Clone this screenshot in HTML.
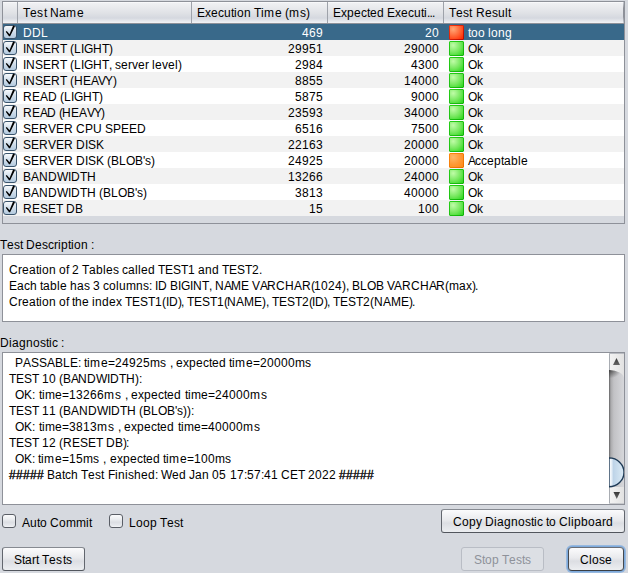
<!DOCTYPE html>
<html><head><meta charset="utf-8">
<style>
html,body{margin:0;padding:0;}
body{width:628px;height:573px;background:#d6d9df;position:relative;overflow:hidden;font-family:"Liberation Sans",sans-serif;font-size:12px;color:#000;}
.t{position:absolute;white-space:nowrap;line-height:16px;height:16px;}
.t i{display:inline-block;font-style:normal;overflow:visible;}
#tbl{position:absolute;left:2px;top:1px;width:621px;height:221px;border:1px solid #8e9199;background:#d6d9df;}
.hd{position:absolute;top:0;height:21px;border-bottom:1px solid #8e9199;background:linear-gradient(#fdfdfe 0px,#eff0f3 1.5px,#e0e2e6 11px,#d5d8df 16px,#e3e5ea 18.5px,#f2f3f6 21px);}
.hsep{position:absolute;top:0;width:1px;height:21px;background:#9ea2aa;}
.row{position:absolute;left:0;width:621px;height:16px;}
.r0{background:#f2f2f2}.r1{background:#fff}
.sel{background:#39698a;color:#fff}
.cb{position:absolute;left:0px;top:1px;width:12px;height:12px;border:1px solid #3a546c;border-radius:3px;background:linear-gradient(#f8fafc,#d4e0ec 45%,#bcd0e2 85%,#b4cadf);}
.ico{position:absolute;left:446px;top:1px;width:15px;height:15px;}
.ck{position:absolute;left:0;top:0;width:16px;height:16px;}
.box{position:absolute;background:#fff;border:1px solid #8e9199;}
.btn{position:absolute;border:1px solid;border-color:#868a91 #62666e #52565d #62666e;border-radius:3px;background:linear-gradient(#fbfbfc,#e9eaed 45%,#dcdee3 60%,#eceef1);}
.chk{position:absolute;width:12px;height:12px;border:1px solid #5a5e66;border-radius:3px;background:linear-gradient(#fbfbfc,#eceef1 35%,#dcdee3 60%,#e6e8ec 85%,#f3f4f6);}
</style></head><body>
<svg width="0" height="0" style="position:absolute"><defs>
<radialGradient id="fR" cx="0.25" cy="0.25" r="1.0"><stop offset="0" stop-color="#ffa878"/><stop offset="0.5" stop-color="#ff6a3a"/><stop offset="1" stop-color="#ff2a00"/></radialGradient>
<linearGradient id="bR" x1="0" y1="0" x2="1" y2="1"><stop offset="0" stop-color="#ff3a10"/><stop offset="1" stop-color="#b00800"/></linearGradient>
<radialGradient id="fG" cx="0.25" cy="0.25" r="1.0"><stop offset="0" stop-color="#c0fca8"/><stop offset="0.55" stop-color="#78e860"/><stop offset="1" stop-color="#30d820"/></radialGradient>
<linearGradient id="bG" x1="0" y1="0" x2="1" y2="1"><stop offset="0" stop-color="#28d018"/><stop offset="1" stop-color="#10b008"/></linearGradient>
<radialGradient id="fO" cx="0.25" cy="0.25" r="1.0"><stop offset="0" stop-color="#ffb868"/><stop offset="0.55" stop-color="#ff9a38"/><stop offset="1" stop-color="#ff8a18"/></radialGradient>
<linearGradient id="bO" x1="0" y1="0" x2="1" y2="1"><stop offset="0" stop-color="#ff8a10"/><stop offset="1" stop-color="#e86e00"/></linearGradient>
</defs></svg>
<div id="tbl">
<div class="hd" style="left:0;width:621px;"></div>
<div class="hsep" style="left:14px"></div>
<div class="hsep" style="left:188px"></div>
<div class="hsep" style="left:324px"></div>
<div class="hsep" style="left:440px"></div>
<div class="hsep" style="left:620px;background:linear-gradient(#c8cbd2,#8e9199 30%,#8e9199 70%,#c8cbd2)"></div>
<div class="t" style="left:20px;top:3px;"><i style="width:7px">T</i><i style="width:7px">e</i><i style="width:7px">s</i><i style="width:3px">t</i><i style="width:3px">&nbsp;</i><i style="width:9px">N</i><i style="width:7px">a</i><i style="width:11px">m</i><i style="width:7px">e</i></div>
<div class="t" style="left:194px;top:3px;"><i style="width:8px">E</i><i style="width:6px">x</i><i style="width:7px">e</i><i style="width:6px">c</i><i style="width:7px">u</i><i style="width:3px">t</i><i style="width:3px">i</i><i style="width:7px">o</i><i style="width:7px">n</i><i style="width:3px">&nbsp;</i><i style="width:7px">T</i><i style="width:3px">i</i><i style="width:11px">m</i><i style="width:7px">e</i><i style="width:3px">&nbsp;</i><i style="width:4px">(</i><i style="width:11px">m</i><i style="width:6px">s</i><i style="width:4px">)</i></div>
<div class="t" style="left:330px;top:3px;"><i style="width:8px">E</i><i style="width:6px">x</i><i style="width:7px">p</i><i style="width:7px">e</i><i style="width:6px">c</i><i style="width:3px">t</i><i style="width:7px">e</i><i style="width:7px">d</i><i style="width:3px">&nbsp;</i><i style="width:8px">E</i><i style="width:6px">x</i><i style="width:7px">e</i><i style="width:6px">c</i><i style="width:7px">u</i><i style="width:3px">t</i><i style="width:3px">i</i><i style="width:2.5px">.</i><i style="width:2.5px">.</i><i style="width:3px">.</i></div>
<div class="t" style="left:446px;top:3px;"><i style="width:7px">T</i><i style="width:7px">e</i><i style="width:6px">s</i><i style="width:3px">t</i><i style="width:4px">&nbsp;</i><i style="width:9px">R</i><i style="width:7px">e</i><i style="width:6px">s</i><i style="width:7px">u</i><i style="width:3px">l</i><i style="width:3px">t</i></div>
<div class="row sel" style="top:22px"><div class="cb"></div><svg class="ck" viewBox="0 0 16 16"><path d="M2.75 7.8 L3.75 7.0 L6.5 10.3 L10.1 1.6 L12.0 2.3 L7.1 12.3 L6.0 12.3 Z" fill="#000"/></svg><div class="t" style="left:20px;top:1px;"><i style="width:9px">D</i><i style="width:9px">D</i><i style="width:7px">L</i></div><div class="t" style="left:299px;top:1px;"><i style="width:7px">4</i><i style="width:7px">6</i><i style="width:7px">9</i></div><div class="t" style="left:422px;top:1px;"><i style="width:7px">2</i><i style="width:7px">0</i></div><svg class="ico" viewBox="0 0 15 15"><path d="M1,0 H14 L15,1 V14 L14,15 H1 L0,14 V1 Z" fill="url(#bR)"/><rect x="1" y="1" width="13" height="13" fill="url(#fR)"/></svg><div class="t" style="left:465px;top:1px;"><i style="width:3px">t</i><i style="width:7px">o</i><i style="width:7px">o</i><i style="width:3px">&nbsp;</i><i style="width:3px">l</i><i style="width:7px">o</i><i style="width:7px">n</i><i style="width:7px">g</i></div></div>
<div class="row r0" style="top:38px"><div class="cb"></div><svg class="ck" viewBox="0 0 16 16"><path d="M2.75 7.8 L3.75 7.0 L6.5 10.3 L10.1 1.6 L12.0 2.3 L7.1 12.3 L6.0 12.3 Z" fill="#000"/></svg><div class="t" style="left:20px;top:1px;"><i style="width:3px">I</i><i style="width:9px">N</i><i style="width:8px">S</i><i style="width:8px">E</i><i style="width:9px">R</i><i style="width:7px">T</i><i style="width:3px">&nbsp;</i><i style="width:4px">(</i><i style="width:7px">L</i><i style="width:3px">I</i><i style="width:9px">G</i><i style="width:9px">H</i><i style="width:7px">T</i><i style="width:4px">)</i></div><div class="t" style="left:285px;top:1px;"><i style="width:7px">2</i><i style="width:7px">9</i><i style="width:7px">9</i><i style="width:7px">5</i><i style="width:7px">1</i></div><div class="t" style="left:401px;top:1px;"><i style="width:7px">2</i><i style="width:7px">9</i><i style="width:7px">0</i><i style="width:7px">0</i><i style="width:7px">0</i></div><svg class="ico" viewBox="0 0 15 15"><path d="M1,0 H14 L15,1 V14 L14,15 H1 L0,14 V1 Z" fill="url(#bG)"/><rect x="1" y="1" width="13" height="13" fill="url(#fG)"/></svg><div class="t" style="left:465px;top:1px;"><i style="width:9px">O</i><i style="width:6px">k</i></div></div>
<div class="row r1" style="top:54px"><div class="cb"></div><svg class="ck" viewBox="0 0 16 16"><path d="M2.75 7.8 L3.75 7.0 L6.5 10.3 L10.1 1.6 L12.0 2.3 L7.1 12.3 L6.0 12.3 Z" fill="#000"/></svg><div class="t" style="left:20px;top:1px;"><i style="width:3px">I</i><i style="width:9px">N</i><i style="width:8px">S</i><i style="width:8px">E</i><i style="width:9px">R</i><i style="width:7px">T</i><i style="width:3px">&nbsp;</i><i style="width:4px">(</i><i style="width:7px">L</i><i style="width:3px">I</i><i style="width:9px">G</i><i style="width:9px">H</i><i style="width:7px">T</i><i style="width:3px">,</i><i style="width:3px">&nbsp;</i><i style="width:6px">s</i><i style="width:7px">e</i><i style="width:4px">r</i><i style="width:6px">v</i><i style="width:7px">e</i><i style="width:4px">r</i><i style="width:3px">&nbsp;</i><i style="width:3px">l</i><i style="width:7px">e</i><i style="width:6px">v</i><i style="width:7px">e</i><i style="width:3px">l</i><i style="width:4px">)</i></div><div class="t" style="left:292px;top:1px;"><i style="width:7px">2</i><i style="width:7px">9</i><i style="width:7px">8</i><i style="width:7px">4</i></div><div class="t" style="left:408px;top:1px;"><i style="width:7px">4</i><i style="width:7px">3</i><i style="width:7px">0</i><i style="width:7px">0</i></div><svg class="ico" viewBox="0 0 15 15"><path d="M1,0 H14 L15,1 V14 L14,15 H1 L0,14 V1 Z" fill="url(#bG)"/><rect x="1" y="1" width="13" height="13" fill="url(#fG)"/></svg><div class="t" style="left:465px;top:1px;"><i style="width:9px">O</i><i style="width:6px">k</i></div></div>
<div class="row r0" style="top:70px"><div class="cb"></div><svg class="ck" viewBox="0 0 16 16"><path d="M2.75 7.8 L3.75 7.0 L6.5 10.3 L10.1 1.6 L12.0 2.3 L7.1 12.3 L6.0 12.3 Z" fill="#000"/></svg><div class="t" style="left:20px;top:1px;"><i style="width:3px">I</i><i style="width:9px">N</i><i style="width:8px">S</i><i style="width:8px">E</i><i style="width:9px">R</i><i style="width:7px">T</i><i style="width:3px">&nbsp;</i><i style="width:4px">(</i><i style="width:9px">H</i><i style="width:8px">E</i><i style="width:7px">A</i><i style="width:7px">V</i><i style="width:8px">Y</i><i style="width:4px">)</i></div><div class="t" style="left:292px;top:1px;"><i style="width:7px">8</i><i style="width:7px">8</i><i style="width:7px">5</i><i style="width:7px">5</i></div><div class="t" style="left:401px;top:1px;"><i style="width:7px">1</i><i style="width:7px">4</i><i style="width:7px">0</i><i style="width:7px">0</i><i style="width:7px">0</i></div><svg class="ico" viewBox="0 0 15 15"><path d="M1,0 H14 L15,1 V14 L14,15 H1 L0,14 V1 Z" fill="url(#bG)"/><rect x="1" y="1" width="13" height="13" fill="url(#fG)"/></svg><div class="t" style="left:465px;top:1px;"><i style="width:9px">O</i><i style="width:6px">k</i></div></div>
<div class="row r1" style="top:86px"><div class="cb"></div><svg class="ck" viewBox="0 0 16 16"><path d="M2.75 7.8 L3.75 7.0 L6.5 10.3 L10.1 1.6 L12.0 2.3 L7.1 12.3 L6.0 12.3 Z" fill="#000"/></svg><div class="t" style="left:20px;top:1px;"><i style="width:9px">R</i><i style="width:8px">E</i><i style="width:8px">A</i><i style="width:9px">D</i><i style="width:3px">&nbsp;</i><i style="width:4px">(</i><i style="width:7px">L</i><i style="width:3px">I</i><i style="width:9px">G</i><i style="width:9px">H</i><i style="width:7px">T</i><i style="width:4px">)</i></div><div class="t" style="left:292px;top:1px;"><i style="width:7px">5</i><i style="width:7px">8</i><i style="width:7px">7</i><i style="width:7px">5</i></div><div class="t" style="left:408px;top:1px;"><i style="width:7px">9</i><i style="width:7px">0</i><i style="width:7px">0</i><i style="width:7px">0</i></div><svg class="ico" viewBox="0 0 15 15"><path d="M1,0 H14 L15,1 V14 L14,15 H1 L0,14 V1 Z" fill="url(#bG)"/><rect x="1" y="1" width="13" height="13" fill="url(#fG)"/></svg><div class="t" style="left:465px;top:1px;"><i style="width:9px">O</i><i style="width:6px">k</i></div></div>
<div class="row r0" style="top:102px"><div class="cb"></div><svg class="ck" viewBox="0 0 16 16"><path d="M2.75 7.8 L3.75 7.0 L6.5 10.3 L10.1 1.6 L12.0 2.3 L7.1 12.3 L6.0 12.3 Z" fill="#000"/></svg><div class="t" style="left:20px;top:1px;"><i style="width:9px">R</i><i style="width:8px">E</i><i style="width:7px">A</i><i style="width:9px">D</i><i style="width:3px">&nbsp;</i><i style="width:3px">(</i><i style="width:9px">H</i><i style="width:8px">E</i><i style="width:8px">A</i><i style="width:7px">V</i><i style="width:7px">Y</i><i style="width:4px">)</i></div><div class="t" style="left:285px;top:1px;"><i style="width:7px">2</i><i style="width:7px">3</i><i style="width:7px">5</i><i style="width:7px">9</i><i style="width:7px">3</i></div><div class="t" style="left:401px;top:1px;"><i style="width:7px">3</i><i style="width:7px">4</i><i style="width:7px">0</i><i style="width:7px">0</i><i style="width:7px">0</i></div><svg class="ico" viewBox="0 0 15 15"><path d="M1,0 H14 L15,1 V14 L14,15 H1 L0,14 V1 Z" fill="url(#bG)"/><rect x="1" y="1" width="13" height="13" fill="url(#fG)"/></svg><div class="t" style="left:465px;top:1px;"><i style="width:9px">O</i><i style="width:6px">k</i></div></div>
<div class="row r1" style="top:118px"><div class="cb"></div><svg class="ck" viewBox="0 0 16 16"><path d="M2.75 7.8 L3.75 7.0 L6.5 10.3 L10.1 1.6 L12.0 2.3 L7.1 12.3 L6.0 12.3 Z" fill="#000"/></svg><div class="t" style="left:20px;top:1px;"><i style="width:8px">S</i><i style="width:8px">E</i><i style="width:9px">R</i><i style="width:8px">V</i><i style="width:8px">E</i><i style="width:9px">R</i><i style="width:3px">&nbsp;</i><i style="width:9px">C</i><i style="width:8px">P</i><i style="width:9px">U</i><i style="width:3px">&nbsp;</i><i style="width:8px">S</i><i style="width:8px">P</i><i style="width:8px">E</i><i style="width:8px">E</i><i style="width:9px">D</i></div><div class="t" style="left:292px;top:1px;"><i style="width:7px">6</i><i style="width:7px">5</i><i style="width:7px">1</i><i style="width:7px">6</i></div><div class="t" style="left:408px;top:1px;"><i style="width:7px">7</i><i style="width:7px">5</i><i style="width:7px">0</i><i style="width:7px">0</i></div><svg class="ico" viewBox="0 0 15 15"><path d="M1,0 H14 L15,1 V14 L14,15 H1 L0,14 V1 Z" fill="url(#bG)"/><rect x="1" y="1" width="13" height="13" fill="url(#fG)"/></svg><div class="t" style="left:465px;top:1px;"><i style="width:9px">O</i><i style="width:6px">k</i></div></div>
<div class="row r0" style="top:134px"><div class="cb"></div><svg class="ck" viewBox="0 0 16 16"><path d="M2.75 7.8 L3.75 7.0 L6.5 10.3 L10.1 1.6 L12.0 2.3 L7.1 12.3 L6.0 12.3 Z" fill="#000"/></svg><div class="t" style="left:20px;top:1px;"><i style="width:8px">S</i><i style="width:8px">E</i><i style="width:9px">R</i><i style="width:8px">V</i><i style="width:8px">E</i><i style="width:9px">R</i><i style="width:3px">&nbsp;</i><i style="width:9px">D</i><i style="width:3px">I</i><i style="width:8px">S</i><i style="width:8px">K</i></div><div class="t" style="left:285px;top:1px;"><i style="width:7px">2</i><i style="width:7px">2</i><i style="width:7px">1</i><i style="width:7px">6</i><i style="width:7px">3</i></div><div class="t" style="left:401px;top:1px;"><i style="width:7px">2</i><i style="width:7px">0</i><i style="width:7px">0</i><i style="width:7px">0</i><i style="width:7px">0</i></div><svg class="ico" viewBox="0 0 15 15"><path d="M1,0 H14 L15,1 V14 L14,15 H1 L0,14 V1 Z" fill="url(#bG)"/><rect x="1" y="1" width="13" height="13" fill="url(#fG)"/></svg><div class="t" style="left:465px;top:1px;"><i style="width:9px">O</i><i style="width:6px">k</i></div></div>
<div class="row r1" style="top:150px"><div class="cb"></div><svg class="ck" viewBox="0 0 16 16"><path d="M2.75 7.8 L3.75 7.0 L6.5 10.3 L10.1 1.6 L12.0 2.3 L7.1 12.3 L6.0 12.3 Z" fill="#000"/></svg><div class="t" style="left:20px;top:1px;"><i style="width:8px">S</i><i style="width:8px">E</i><i style="width:9px">R</i><i style="width:8px">V</i><i style="width:8px">E</i><i style="width:9px">R</i><i style="width:3px">&nbsp;</i><i style="width:9px">D</i><i style="width:3px">I</i><i style="width:8px">S</i><i style="width:8px">K</i><i style="width:3px">&nbsp;</i><i style="width:4px">(</i><i style="width:8px">B</i><i style="width:7px">L</i><i style="width:9px">O</i><i style="width:8px">B</i><i style="width:2px">&#x27;</i><i style="width:6px">s</i><i style="width:4px">)</i></div><div class="t" style="left:285px;top:1px;"><i style="width:7px">2</i><i style="width:7px">4</i><i style="width:7px">9</i><i style="width:7px">2</i><i style="width:7px">5</i></div><div class="t" style="left:401px;top:1px;"><i style="width:7px">2</i><i style="width:7px">0</i><i style="width:7px">0</i><i style="width:7px">0</i><i style="width:7px">0</i></div><svg class="ico" viewBox="0 0 15 15"><path d="M1,0 H14 L15,1 V14 L14,15 H1 L0,14 V1 Z" fill="url(#bO)"/><rect x="1" y="1" width="13" height="13" fill="url(#fO)"/></svg><div class="t" style="left:465px;top:1px;"><i style="width:7px">A</i><i style="width:6px">c</i><i style="width:6px">c</i><i style="width:7px">e</i><i style="width:7px">p</i><i style="width:3px">t</i><i style="width:7px">a</i><i style="width:7px">b</i><i style="width:3px">l</i><i style="width:7px">e</i></div></div>
<div class="row r0" style="top:166px"><div class="cb"></div><svg class="ck" viewBox="0 0 16 16"><path d="M2.75 7.8 L3.75 7.0 L6.5 10.3 L10.1 1.6 L12.0 2.3 L7.1 12.3 L6.0 12.3 Z" fill="#000"/></svg><div class="t" style="left:20px;top:1px;"><i style="width:8px">B</i><i style="width:8px">A</i><i style="width:9px">N</i><i style="width:9px">D</i><i style="width:11px">W</i><i style="width:3px">I</i><i style="width:9px">D</i><i style="width:7px">T</i><i style="width:9px">H</i></div><div class="t" style="left:285px;top:1px;"><i style="width:7px">1</i><i style="width:7px">3</i><i style="width:7px">2</i><i style="width:7px">6</i><i style="width:7px">6</i></div><div class="t" style="left:401px;top:1px;"><i style="width:7px">2</i><i style="width:7px">4</i><i style="width:7px">0</i><i style="width:7px">0</i><i style="width:7px">0</i></div><svg class="ico" viewBox="0 0 15 15"><path d="M1,0 H14 L15,1 V14 L14,15 H1 L0,14 V1 Z" fill="url(#bG)"/><rect x="1" y="1" width="13" height="13" fill="url(#fG)"/></svg><div class="t" style="left:465px;top:1px;"><i style="width:9px">O</i><i style="width:6px">k</i></div></div>
<div class="row r1" style="top:182px"><div class="cb"></div><svg class="ck" viewBox="0 0 16 16"><path d="M2.75 7.8 L3.75 7.0 L6.5 10.3 L10.1 1.6 L12.0 2.3 L7.1 12.3 L6.0 12.3 Z" fill="#000"/></svg><div class="t" style="left:20px;top:1px;"><i style="width:8px">B</i><i style="width:8px">A</i><i style="width:9px">N</i><i style="width:9px">D</i><i style="width:11px">W</i><i style="width:3px">I</i><i style="width:9px">D</i><i style="width:7px">T</i><i style="width:9px">H</i><i style="width:3px">&nbsp;</i><i style="width:4px">(</i><i style="width:8px">B</i><i style="width:7px">L</i><i style="width:9px">O</i><i style="width:8px">B</i><i style="width:2px">&#x27;</i><i style="width:6px">s</i><i style="width:4px">)</i></div><div class="t" style="left:292px;top:1px;"><i style="width:7px">3</i><i style="width:7px">8</i><i style="width:7px">1</i><i style="width:7px">3</i></div><div class="t" style="left:401px;top:1px;"><i style="width:7px">4</i><i style="width:7px">0</i><i style="width:7px">0</i><i style="width:7px">0</i><i style="width:7px">0</i></div><svg class="ico" viewBox="0 0 15 15"><path d="M1,0 H14 L15,1 V14 L14,15 H1 L0,14 V1 Z" fill="url(#bG)"/><rect x="1" y="1" width="13" height="13" fill="url(#fG)"/></svg><div class="t" style="left:465px;top:1px;"><i style="width:9px">O</i><i style="width:6px">k</i></div></div>
<div class="row r0" style="top:198px"><div class="cb"></div><svg class="ck" viewBox="0 0 16 16"><path d="M2.75 7.8 L3.75 7.0 L6.5 10.3 L10.1 1.6 L12.0 2.3 L7.1 12.3 L6.0 12.3 Z" fill="#000"/></svg><div class="t" style="left:20px;top:1px;"><i style="width:9px">R</i><i style="width:8px">E</i><i style="width:8px">S</i><i style="width:8px">E</i><i style="width:7px">T</i><i style="width:3px">&nbsp;</i><i style="width:9px">D</i><i style="width:8px">B</i></div><div class="t" style="left:306px;top:1px;"><i style="width:7px">1</i><i style="width:7px">5</i></div><div class="t" style="left:415px;top:1px;"><i style="width:7px">1</i><i style="width:7px">0</i><i style="width:7px">0</i></div><svg class="ico" viewBox="0 0 15 15"><path d="M1,0 H14 L15,1 V14 L14,15 H1 L0,14 V1 Z" fill="url(#bG)"/><rect x="1" y="1" width="13" height="13" fill="url(#fG)"/></svg><div class="t" style="left:465px;top:1px;"><i style="width:9px">O</i><i style="width:6px">k</i></div></div>
</div>
<div class="t" style="left:0px;top:237px;"><i style="width:7px">T</i><i style="width:7px">e</i><i style="width:6px">s</i><i style="width:3px">t</i><i style="width:3px">&nbsp;</i><i style="width:9px">D</i><i style="width:7px">e</i><i style="width:6px">s</i><i style="width:6px">c</i><i style="width:4px">r</i><i style="width:3px">i</i><i style="width:7px">p</i><i style="width:3px">t</i><i style="width:3px">i</i><i style="width:7px">o</i><i style="width:7px">n</i><i style="width:3px">&nbsp;</i><i style="width:3px">:</i></div>
<div class="box" style="left:2px;top:254px;width:621px;height:66px;">
<div class="t" style="left:6px;top:7px;"><i style="width:9px">C</i><i style="width:4px">r</i><i style="width:7px">e</i><i style="width:7px">a</i><i style="width:3px">t</i><i style="width:3px">i</i><i style="width:7px">o</i><i style="width:7px">n</i><i style="width:3px">&nbsp;</i><i style="width:7px">o</i><i style="width:3px">f</i><i style="width:3px">&nbsp;</i><i style="width:7px">2</i><i style="width:3px">&nbsp;</i><i style="width:7px">T</i><i style="width:7px">a</i><i style="width:7px">b</i><i style="width:3px">l</i><i style="width:7px">e</i><i style="width:6px">s</i><i style="width:3px">&nbsp;</i><i style="width:6px">c</i><i style="width:7px">a</i><i style="width:3px">l</i><i style="width:3px">l</i><i style="width:7px">e</i><i style="width:7px">d</i><i style="width:3px">&nbsp;</i><i style="width:7px">T</i><i style="width:8px">E</i><i style="width:8px">S</i><i style="width:7px">T</i><i style="width:7px">1</i><i style="width:3px">&nbsp;</i><i style="width:7px">a</i><i style="width:7px">n</i><i style="width:7px">d</i><i style="width:3px">&nbsp;</i><i style="width:7px">T</i><i style="width:8px">E</i><i style="width:8px">S</i><i style="width:7px">T</i><i style="width:7px">2</i><i style="width:3px">.</i></div>
<div class="t" style="left:6px;top:23px;"><i style="width:8px">E</i><i style="width:7px">a</i><i style="width:6px">c</i><i style="width:7px">h</i><i style="width:3px">&nbsp;</i><i style="width:3px">t</i><i style="width:7px">a</i><i style="width:7px">b</i><i style="width:3px">l</i><i style="width:7px">e</i><i style="width:3px">&nbsp;</i><i style="width:7px">h</i><i style="width:7px">a</i><i style="width:6px">s</i><i style="width:3px">&nbsp;</i><i style="width:7px">3</i><i style="width:3px">&nbsp;</i><i style="width:6px">c</i><i style="width:7px">o</i><i style="width:3px">l</i><i style="width:7px">u</i><i style="width:10px">m</i><i style="width:7px">n</i><i style="width:6px">s</i><i style="width:3px">:</i><i style="width:3px">&nbsp;</i><i style="width:3px">I</i><i style="width:9px">D</i><i style="width:3px">&nbsp;</i><i style="width:8px">B</i><i style="width:3px">I</i><i style="width:9px">G</i><i style="width:3px">I</i><i style="width:9px">N</i><i style="width:7px">T</i><i style="width:3px">,</i><i style="width:3px">&nbsp;</i><i style="width:9px">N</i><i style="width:7px">A</i><i style="width:10px">M</i><i style="width:8px">E</i><i style="width:3px">&nbsp;</i><i style="width:8px">V</i><i style="width:7px">A</i><i style="width:9px">R</i><i style="width:9px">C</i><i style="width:9px">H</i><i style="width:8px">A</i><i style="width:9px">R</i><i style="width:3px">(</i><i style="width:7px">1</i><i style="width:7px">0</i><i style="width:7px">2</i><i style="width:7px">4</i><i style="width:4px">)</i><i style="width:3px">,</i><i style="width:3px">&nbsp;</i><i style="width:8px">B</i><i style="width:7px">L</i><i style="width:9px">O</i><i style="width:8px">B</i><i style="width:3px">&nbsp;</i><i style="width:7px">V</i><i style="width:8px">A</i><i style="width:9px">R</i><i style="width:9px">C</i><i style="width:9px">H</i><i style="width:7px">A</i><i style="width:9px">R</i><i style="width:4px">(</i><i style="width:10px">m</i><i style="width:7px">a</i><i style="width:6px">x</i><i style="width:3px">)</i><i style="width:3px">.</i></div>
<div class="t" style="left:6px;top:39px;"><i style="width:9px">C</i><i style="width:4px">r</i><i style="width:7px">e</i><i style="width:7px">a</i><i style="width:3px">t</i><i style="width:3px">i</i><i style="width:7px">o</i><i style="width:7px">n</i><i style="width:3px">&nbsp;</i><i style="width:7px">o</i><i style="width:3px">f</i><i style="width:3px">&nbsp;</i><i style="width:3px">t</i><i style="width:7px">h</i><i style="width:7px">e</i><i style="width:3px">&nbsp;</i><i style="width:3px">i</i><i style="width:7px">n</i><i style="width:7px">d</i><i style="width:7px">e</i><i style="width:6px">x</i><i style="width:3px">&nbsp;</i><i style="width:7px">T</i><i style="width:8px">E</i><i style="width:8px">S</i><i style="width:7px">T</i><i style="width:7px">1</i><i style="width:4px">(</i><i style="width:3px">I</i><i style="width:9px">D</i><i style="width:3px">)</i><i style="width:3px">,</i><i style="width:3px">&nbsp;</i><i style="width:7px">T</i><i style="width:8px">E</i><i style="width:8px">S</i><i style="width:7px">T</i><i style="width:7px">1</i><i style="width:3px">(</i><i style="width:9px">N</i><i style="width:8px">A</i><i style="width:10px">M</i><i style="width:8px">E</i><i style="width:4px">)</i><i style="width:3px">,</i><i style="width:3px">&nbsp;</i><i style="width:7px">T</i><i style="width:8px">E</i><i style="width:8px">S</i><i style="width:7px">T</i><i style="width:7px">2</i><i style="width:3px">(</i><i style="width:3px">I</i><i style="width:9px">D</i><i style="width:3px">)</i><i style="width:3px">,</i><i style="width:3px">&nbsp;</i><i style="width:7px">T</i><i style="width:8px">E</i><i style="width:8px">S</i><i style="width:7px">T</i><i style="width:7px">2</i><i style="width:4px">(</i><i style="width:9px">N</i><i style="width:8px">A</i><i style="width:10px">M</i><i style="width:8px">E</i><i style="width:3px">)</i><i style="width:3px">.</i></div>
</div>
<div class="t" style="left:0px;top:335px;"><i style="width:9px">D</i><i style="width:3px">i</i><i style="width:7px">a</i><i style="width:7px">g</i><i style="width:7px">n</i><i style="width:7px">o</i><i style="width:6px">s</i><i style="width:3px">t</i><i style="width:3px">i</i><i style="width:6px">c</i><i style="width:3px">&nbsp;</i><i style="width:3px">:</i></div>
<div class="box" style="left:2px;top:352px;width:621px;height:151px;">
<div class="t" style="left:6px;top:2px;"><i style="width:3px">&nbsp;</i><i style="width:3px">&nbsp;</i><i style="width:8px">P</i><i style="width:8px">A</i><i style="width:8px">S</i><i style="width:8px">S</i><i style="width:8px">A</i><i style="width:8px">B</i><i style="width:7px">L</i><i style="width:8px">E</i><i style="width:3px">:</i><i style="width:3px">&nbsp;</i><i style="width:3px">t</i><i style="width:3px">i</i><i style="width:11px">m</i><i style="width:7px">e</i><i style="width:7px">=</i><i style="width:7px">2</i><i style="width:7px">4</i><i style="width:7px">9</i><i style="width:7px">2</i><i style="width:7px">5</i><i style="width:10px">m</i><i style="width:6px">s</i><i style="width:4px">&nbsp;</i><i style="width:3px">,</i><i style="width:3px">&nbsp;</i><i style="width:7px">e</i><i style="width:6px">x</i><i style="width:7px">p</i><i style="width:7px">e</i><i style="width:6px">c</i><i style="width:3px">t</i><i style="width:7px">e</i><i style="width:7px">d</i><i style="width:3px">&nbsp;</i><i style="width:3px">t</i><i style="width:3px">i</i><i style="width:11px">m</i><i style="width:7px">e</i><i style="width:7px">=</i><i style="width:7px">2</i><i style="width:7px">0</i><i style="width:7px">0</i><i style="width:7px">0</i><i style="width:7px">0</i><i style="width:10px">m</i><i style="width:6px">s</i></div>
<div class="t" style="left:6px;top:18px;"><i style="width:7px">T</i><i style="width:8px">E</i><i style="width:8px">S</i><i style="width:7px">T</i><i style="width:3px">&nbsp;</i><i style="width:7px">1</i><i style="width:7px">0</i><i style="width:3px">&nbsp;</i><i style="width:4px">(</i><i style="width:8px">B</i><i style="width:7px">A</i><i style="width:9px">N</i><i style="width:9px">D</i><i style="width:11px">W</i><i style="width:3px">I</i><i style="width:9px">D</i><i style="width:7px">T</i><i style="width:9px">H</i><i style="width:4px">)</i><i style="width:3px">:</i></div>
<div class="t" style="left:6px;top:34px;"><i style="width:3px">&nbsp;</i><i style="width:3px">&nbsp;</i><i style="width:9px">O</i><i style="width:8px">K</i><i style="width:3px">:</i><i style="width:4px">&nbsp;</i><i style="width:3px">t</i><i style="width:3px">i</i><i style="width:10px">m</i><i style="width:7px">e</i><i style="width:7px">=</i><i style="width:7px">1</i><i style="width:7px">3</i><i style="width:7px">2</i><i style="width:7px">6</i><i style="width:7px">6</i><i style="width:11px">m</i><i style="width:6px">s</i><i style="width:4px">&nbsp;</i><i style="width:3px">,</i><i style="width:3px">&nbsp;</i><i style="width:7px">e</i><i style="width:6px">x</i><i style="width:7px">p</i><i style="width:7px">e</i><i style="width:6px">c</i><i style="width:3px">t</i><i style="width:7px">e</i><i style="width:7px">d</i><i style="width:4px">&nbsp;</i><i style="width:3px">t</i><i style="width:3px">i</i><i style="width:10px">m</i><i style="width:7px">e</i><i style="width:7px">=</i><i style="width:7px">2</i><i style="width:7px">4</i><i style="width:7px">0</i><i style="width:7px">0</i><i style="width:7px">0</i><i style="width:11px">m</i><i style="width:6px">s</i></div>
<div class="t" style="left:6px;top:50px;"><i style="width:7px">T</i><i style="width:8px">E</i><i style="width:8px">S</i><i style="width:7px">T</i><i style="width:3px">&nbsp;</i><i style="width:7px">1</i><i style="width:7px">1</i><i style="width:3px">&nbsp;</i><i style="width:4px">(</i><i style="width:8px">B</i><i style="width:8px">A</i><i style="width:9px">N</i><i style="width:9px">D</i><i style="width:11px">W</i><i style="width:3px">I</i><i style="width:9px">D</i><i style="width:7px">T</i><i style="width:9px">H</i><i style="width:3px">&nbsp;</i><i style="width:4px">(</i><i style="width:8px">B</i><i style="width:7px">L</i><i style="width:9px">O</i><i style="width:8px">B</i><i style="width:2px">&#x27;</i><i style="width:6px">s</i><i style="width:4px">)</i><i style="width:4px">)</i><i style="width:3px">:</i></div>
<div class="t" style="left:6px;top:66px;"><i style="width:3px">&nbsp;</i><i style="width:3px">&nbsp;</i><i style="width:9px">O</i><i style="width:8px">K</i><i style="width:3px">:</i><i style="width:4px">&nbsp;</i><i style="width:3px">t</i><i style="width:3px">i</i><i style="width:10px">m</i><i style="width:7px">e</i><i style="width:7px">=</i><i style="width:7px">3</i><i style="width:7px">8</i><i style="width:7px">1</i><i style="width:7px">3</i><i style="width:11px">m</i><i style="width:6px">s</i><i style="width:4px">&nbsp;</i><i style="width:3px">,</i><i style="width:3px">&nbsp;</i><i style="width:7px">e</i><i style="width:6px">x</i><i style="width:7px">p</i><i style="width:7px">e</i><i style="width:6px">c</i><i style="width:3px">t</i><i style="width:7px">e</i><i style="width:7px">d</i><i style="width:4px">&nbsp;</i><i style="width:3px">t</i><i style="width:3px">i</i><i style="width:10px">m</i><i style="width:7px">e</i><i style="width:7px">=</i><i style="width:7px">4</i><i style="width:7px">0</i><i style="width:7px">0</i><i style="width:7px">0</i><i style="width:7px">0</i><i style="width:11px">m</i><i style="width:6px">s</i></div>
<div class="t" style="left:6px;top:82px;"><i style="width:7px">T</i><i style="width:8px">E</i><i style="width:8px">S</i><i style="width:7px">T</i><i style="width:3px">&nbsp;</i><i style="width:7px">1</i><i style="width:7px">2</i><i style="width:3px">&nbsp;</i><i style="width:4px">(</i><i style="width:9px">R</i><i style="width:8px">E</i><i style="width:8px">S</i><i style="width:8px">E</i><i style="width:7px">T</i><i style="width:3px">&nbsp;</i><i style="width:9px">D</i><i style="width:8px">B</i><i style="width:3px">)</i><i style="width:3px">:</i></div>
<div class="t" style="left:6px;top:98px;"><i style="width:3px">&nbsp;</i><i style="width:3px">&nbsp;</i><i style="width:9px">O</i><i style="width:8px">K</i><i style="width:3px">:</i><i style="width:3px">&nbsp;</i><i style="width:3px">t</i><i style="width:3px">i</i><i style="width:11px">m</i><i style="width:7px">e</i><i style="width:7px">=</i><i style="width:7px">1</i><i style="width:7px">5</i><i style="width:10px">m</i><i style="width:7px">s</i><i style="width:3px">&nbsp;</i><i style="width:3px">,</i><i style="width:4px">&nbsp;</i><i style="width:7px">e</i><i style="width:6px">x</i><i style="width:7px">p</i><i style="width:7px">e</i><i style="width:6px">c</i><i style="width:3px">t</i><i style="width:7px">e</i><i style="width:7px">d</i><i style="width:3px">&nbsp;</i><i style="width:3px">t</i><i style="width:3px">i</i><i style="width:11px">m</i><i style="width:7px">e</i><i style="width:7px">=</i><i style="width:7px">1</i><i style="width:7px">0</i><i style="width:7px">0</i><i style="width:10px">m</i><i style="width:6px">s</i></div>
<div class="t" style="left:6px;top:114px;"><i style="width:7px;-webkit-text-stroke:0.35px #000">#</i><i style="width:7px;-webkit-text-stroke:0.35px #000">#</i><i style="width:7px;-webkit-text-stroke:0.35px #000">#</i><i style="width:7px;-webkit-text-stroke:0.35px #000">#</i><i style="width:7px;-webkit-text-stroke:0.35px #000">#</i><i style="width:3px">&nbsp;</i><i style="width:8px">B</i><i style="width:7px">a</i><i style="width:3px">t</i><i style="width:6px">c</i><i style="width:7px">h</i><i style="width:3px">&nbsp;</i><i style="width:7px">T</i><i style="width:7px">e</i><i style="width:6px">s</i><i style="width:3px">t</i><i style="width:4px">&nbsp;</i><i style="width:7px">F</i><i style="width:3px">i</i><i style="width:7px">n</i><i style="width:3px">i</i><i style="width:6px">s</i><i style="width:7px">h</i><i style="width:7px">e</i><i style="width:7px">d</i><i style="width:3px">:</i><i style="width:3px">&nbsp;</i><i style="width:11px">W</i><i style="width:7px">e</i><i style="width:7px">d</i><i style="width:3px">&nbsp;</i><i style="width:6px">J</i><i style="width:7px">a</i><i style="width:7px">n</i><i style="width:3px">&nbsp;</i><i style="width:7px">0</i><i style="width:7px">5</i><i style="width:4px">&nbsp;</i><i style="width:7px">1</i><i style="width:7px">7</i><i style="width:3px">:</i><i style="width:7px">5</i><i style="width:7px">7</i><i style="width:3px">:</i><i style="width:7px">4</i><i style="width:7px">1</i><i style="width:3px">&nbsp;</i><i style="width:9px">C</i><i style="width:8px">E</i><i style="width:7px">T</i><i style="width:3px">&nbsp;</i><i style="width:7px">2</i><i style="width:7px">0</i><i style="width:7px">2</i><i style="width:7px">2</i><i style="width:3px">&nbsp;</i><i style="width:7px;-webkit-text-stroke:0.35px #000">#</i><i style="width:7px;-webkit-text-stroke:0.35px #000">#</i><i style="width:7px;-webkit-text-stroke:0.35px #000">#</i><i style="width:7px;-webkit-text-stroke:0.35px #000">#</i><i style="width:7px;-webkit-text-stroke:0.35px #000">#</i></div>
<svg style="position:absolute;left:606px;top:0;" width="15" height="151" viewBox="0 0 15 151">
<defs>
<linearGradient id="trk" x1="0" y1="0" x2="1" y2="0"><stop offset="0" stop-color="#626264"/><stop offset="0.12" stop-color="#aaaaac"/><stop offset="0.32" stop-color="#c2c2c5"/><stop offset="1" stop-color="#d6d7db"/></linearGradient>
<radialGradient id="trks" gradientUnits="userSpaceOnUse" cx="0" cy="17" r="12" gradientTransform="translate(0,17) scale(1,0.7) translate(0,-17)"><stop offset="0" stop-color="#333" stop-opacity="0.85"/><stop offset="0.5" stop-color="#444" stop-opacity="0.45"/><stop offset="1" stop-color="#444" stop-opacity="0"/></radialGradient>
<linearGradient id="btn" x1="0" y1="0" x2="1" y2="0"><stop offset="0" stop-color="#f4f4f4"/><stop offset="1" stop-color="#e2e2e2"/></linearGradient>
<linearGradient id="arw" x1="0" y1="0" x2="0" y2="1"><stop offset="0" stop-color="#383838"/><stop offset="1" stop-color="#666"/></linearGradient>
<linearGradient id="thm" x1="0" y1="0" x2="1" y2="0"><stop offset="0" stop-color="#ffffff"/><stop offset="0.14" stop-color="#eef4fa"/><stop offset="0.3" stop-color="#bed4e8"/><stop offset="1" stop-color="#dcebf6"/></linearGradient>
</defs>
<rect x="0" y="0" width="15" height="151" fill="url(#btn)"/>
<path d="M0,17 A15,8.7 0 0 1 15,25.7 V151 H0 Z" fill="url(#trk)"/>
<path d="M0,17 A15,8.7 0 0 1 15,25.7 V151 H0 Z" fill="url(#trks)"/>
<rect x="0" y="134" width="15" height="17" fill="url(#btn)"/>
<rect x="0" y="0" width="1" height="17" fill="#a8acb2"/>
<rect x="0" y="0" width="15" height="1" fill="#b8bbc1"/>
<rect x="0" y="134" width="1" height="17" fill="#a8acb2"/>
<rect x="0" y="150" width="15" height="1" fill="#c8cace"/>
<path d="M0,104.9 A15,14.45 0 0 1 0,133.8 Z" fill="url(#thm)" stroke="#1e3a56" stroke-width="1.4"/>
<path d="M4,12 H11 L7.5,5 Z" fill="url(#arw)"/>
<path d="M4.5,139 H11 L7.75,146 Z" fill="url(#arw)"/>
</svg>
</div>
<div class="chk" style="left:2px;top:514px;"></div>
<div class="t" style="left:22px;top:515px;"><i style="width:8px">A</i><i style="width:7px">u</i><i style="width:3px">t</i><i style="width:7px">o</i><i style="width:3px">&nbsp;</i><i style="width:9px">C</i><i style="width:7px">o</i><i style="width:10px">m</i><i style="width:10px">m</i><i style="width:3px">i</i><i style="width:3px">t</i></div>
<div class="chk" style="left:109px;top:514px;"></div>
<div class="t" style="left:129px;top:515px;"><i style="width:7px">L</i><i style="width:7px">o</i><i style="width:7px">o</i><i style="width:7px">p</i><i style="width:3px">&nbsp;</i><i style="width:7px">T</i><i style="width:7px">e</i><i style="width:6px">s</i><i style="width:3px">t</i></div>
<div class="btn" style="left:441px;top:509px;width:182px;height:22px;"></div><div class="t" style="left:453px;top:514px;"><i style="width:9px">C</i><i style="width:7px">o</i><i style="width:7px">p</i><i style="width:6px">y</i><i style="width:3px">&nbsp;</i><i style="width:9px">D</i><i style="width:3px">i</i><i style="width:7px">a</i><i style="width:7px">g</i><i style="width:7px">n</i><i style="width:7px">o</i><i style="width:6px">s</i><i style="width:3px">t</i><i style="width:3px">i</i><i style="width:6px">c</i><i style="width:3px">&nbsp;</i><i style="width:3px">t</i><i style="width:7px">o</i><i style="width:3px">&nbsp;</i><i style="width:9px">C</i><i style="width:3px">l</i><i style="width:3px">i</i><i style="width:7px">p</i><i style="width:7px">b</i><i style="width:7px">o</i><i style="width:7px">a</i><i style="width:4px">r</i><i style="width:7px">d</i></div>
<div class="btn" style="left:2px;top:547px;width:81px;height:22px;"></div><div class="t" style="left:14px;top:552px;"><i style="width:8px">S</i><i style="width:3px">t</i><i style="width:7px">a</i><i style="width:4px">r</i><i style="width:3px">t</i><i style="width:3px">&nbsp;</i><i style="width:7px">T</i><i style="width:7px">e</i><i style="width:7px">s</i><i style="width:3px">t</i><i style="width:6px">s</i></div>
<div class="btn" style="left:461px;top:547px;width:81px;height:22px;border-color:#b9bdc5;background:#dcdfe4;"></div><div class="t" style="left:474px;top:552px;color:#8e929a;"><i style="width:8px">S</i><i style="width:3px">t</i><i style="width:7px">o</i><i style="width:7px">p</i><i style="width:3px">&nbsp;</i><i style="width:7px">T</i><i style="width:7px">e</i><i style="width:6px">s</i><i style="width:3px">t</i><i style="width:6px">s</i></div>
<div class="btn" style="left:568px;top:547px;width:54px;height:22px;box-shadow:0 0 0 1px #7eaadc,0 0 0 2px rgba(130,172,222,0.75);border-color:#6a6e76 #45494f #3a3e44 #45494f;border-radius:4px;"></div><div class="t" style="left:580px;top:552px;"><i style="width:9px">C</i><i style="width:3px">l</i><i style="width:7px">o</i><i style="width:6px">s</i><i style="width:7px">e</i></div>
</body></html>
